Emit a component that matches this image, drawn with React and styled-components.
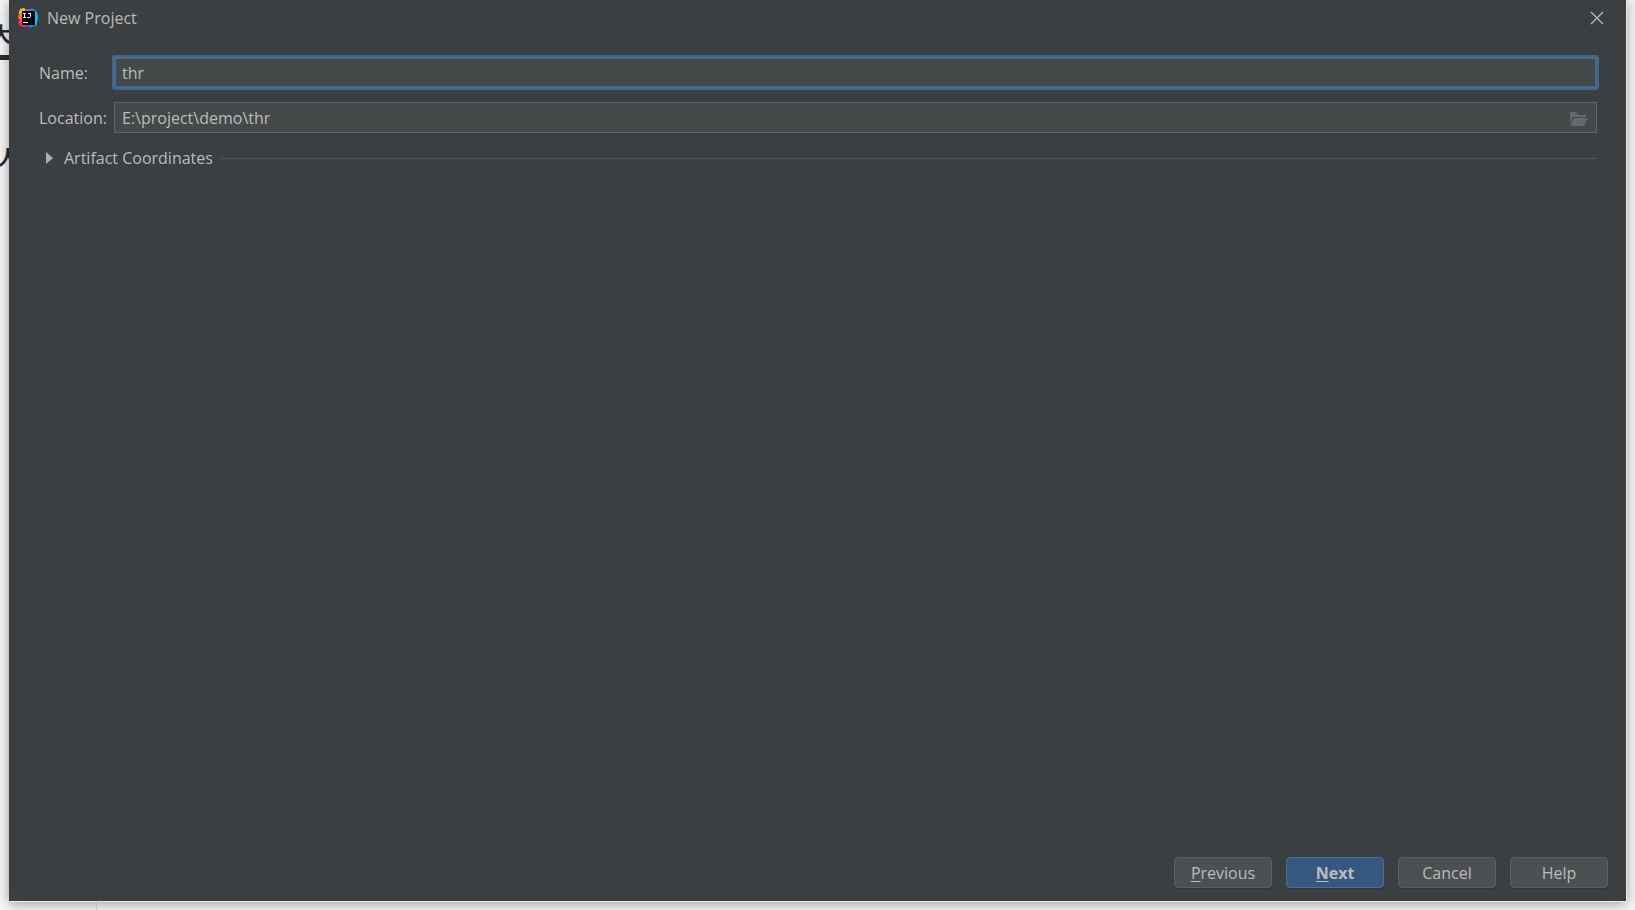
import React, { useState } from 'react';
import styled, { createGlobalStyle } from 'styled-components';

const GlobalStyle = createGlobalStyle`
  * {
    box-sizing: border-box;
  }

  body {
    margin: 0;
    background: #f4f4f4;
    font-family: 'Open Sans', 'Noto Sans CJK SC', sans-serif;
    font-size: 16px;
    color: #bbbbbb;
  }
`;

const Desktop = styled.div`
  display: flex;
  min-height: 100vh;
  overflow: hidden;
`;

const Gutter = styled.div`
  flex: 0 0 9px;
  overflow: hidden;
  background: #f7f7f7;
  color: #2b2b2b;
`;

const PageText = styled.div`
  height: 24px;
  line-height: 24px;
  font-size: 20px;
  font-weight: 700;
  white-space: nowrap;
  margin-top: ${props => props.$top}px;
  margin-left: ${props => props.$left}px;
`;

const PageRule = styled.div`
  height: 5px;
  margin-top: 8px;
  background: #2f2f2f;
`;

const Main = styled.div`
  flex: 1;
  display: flex;
  flex-direction: column;
  padding-right: 9px;
`;

const Dialog = styled.form`
  flex: 1;
  display: flex;
  flex-direction: column;
  background: #3c3f41;
  box-shadow: 1px 1px 0 #ececec, 0 2px 12px rgba(0, 0, 0, 0.4);
`;

const PageFoot = styled.div`
  width: 88px;
  height: 9px;
  border-right: 1px solid #c4c4c4;
`;

const TitleBar = styled.header`
  display: flex;
  align-items: center;
  height: 36px;
  padding: 0 22px 0 9px;
`;

const Title = styled.h1`
  flex: 1;
  margin: 0 0 0 9px;
  font-size: 16px;
  font-weight: 400;
`;

const CloseButton = styled.button`
  display: flex;
  padding: 0;
  border: none;
  background: none;
  color: #bbbbbb;
`;

const Fields = styled.div`
  flex: 1;
  padding: 21px 29px 0 30px;
`;

const Field = styled.div`
  display: flex;
  align-items: center;
  margin-bottom: 14px;
`;

const Label = styled.label`
  flex: 0 0 75px;
`;

const InputBox = styled.div`
  flex: 1;
  display: flex;
  align-items: center;
  height: 31px;
  padding-right: 7px;
  background: #45494a;
  border: 1px solid #646464;

  &:has(input[data-active='true']) {
    border: 1px solid #466d94;
    box-shadow: 0 0 0 2px #40668c, inset 0 0 0 1px #43698f;
    border-radius: 1px;
  }
`;

const Input = styled.input`
  flex: 1;
  min-width: 0;
  height: 27px;
  padding: 0 7px;
  border: none;
  outline: none;
  background: none;
  color: #bbbbbb;
  font: inherit;
`;

const IconButton = styled.button`
  display: flex;
  padding: 0;
  border: none;
  background: none;
`;

const Section = styled.div`
  display: flex;
  align-items: center;
  gap: 8px;
`;

const SectionToggle = styled.button`
  display: flex;
  align-items: center;
  gap: 11px;
  padding: 0 0 0 7px;
  border: none;
  background: none;
  color: #bbbbbb;
  font: inherit;
`;

const Line = styled.hr`
  flex: 1;
  height: 1px;
  margin: 0;
  border: none;
  background: #515658;
`;

const Footer = styled.footer`
  display: flex;
  justify-content: flex-end;
  gap: 14px;
  padding: 0 18px 13px;
`;

const Button = styled.button`
  width: 98px;
  height: 31px;
  padding: 0;
  border: 1px solid ${props => (props.$primary ? '#4c708c' : '#5e6060')};
  border-radius: 4px;
  background: ${props => (props.$primary ? '#365880' : '#4c5052')};
  color: #bbbbbb;
  font-family: inherit;
  font-size: 16px;
  font-weight: ${props => (props.$primary ? 700 : 400)};
  box-shadow: 0 1px 1px rgba(0, 0, 0, 0.15);
`;

const Mnemonic = styled.span`
  text-decoration: underline;
  text-underline-offset: 2px;
`;

function IdeaLogo() {
  return (
    <svg width="20" height="20" viewBox="0 0 20 20" aria-hidden="true">
      <path d="M1 4L2 1L6 0L10 3V17L7 19L2 18L0 14L2 10Z" fill="#fe315d" />
      <path d="M1 4L2 1L6 0L9 3L4 7L3 10L1 8Z" fill="#fdb60d" />
      <path d="M1 6L4 5V11L2 12L0 10Z" fill="#f97a12" />
      <path d="M9 3L14 0L19 4L20 10L18 18L12 20L8 17Z" fill="#087cfa" />
      <path d="M15 1L19 4L20 10L18 18L16 17V3Z" fill="#07c3f2" />
      <path d="M7 2L12 1L14 4H6Z" fill="#c757bc" />
      <rect x="4" y="3" width="13" height="14" fill="#000000" />
      <path d="M5 5.500h3M6.500 5v5M5 9.500h3" stroke="#ffffff" fill="none" />
      <path d="M10 5.500h3M12.500 5v3.500q0 1-1 1H9" stroke="#ffffff" fill="none" />
      <rect x="5" y="14" width="5" height="1" fill="#ffffff" />
    </svg>
  );
}

function CloseIcon() {
  return (
    <svg width="14" height="14" viewBox="0 0 14 14" aria-hidden="true">
      <path d="M1 1l12 12M13 1L1 13" stroke="currentColor" strokeWidth="1.2" fill="none" />
    </svg>
  );
}

function FolderIcon() {
  return (
    <svg width="20" height="16" viewBox="0 0 20 16" aria-hidden="true">
      <path d="M1 2h6l2 3h8v2H4L1 13z" fill="#63696d" />
      <path d="M5 8h14l-4 8H1z" fill="#63696d" />
    </svg>
  );
}

function ArrowIcon() {
  return (
    <svg width="7" height="12" viewBox="0 0 7 12" aria-hidden="true">
      <path d="M0 0l7 6-7 6z" fill="#adadad" />
    </svg>
  );
}

function App() {
  const [name, setName] = useState('thr');
  const [location, setLocation] = useState('E:\\project\\demo\\thr');

  return (
    <>
      <GlobalStyle />
      <Desktop>
        <Gutter aria-hidden="true">
          <PageText $top={23} $left={-9}>大</PageText>
          <PageRule />
          <PageText $top={86} $left={-2}>人</PageText>
        </Gutter>
        <Main>
          <Dialog onSubmit={e => e.preventDefault()}>
            <TitleBar>
              <IdeaLogo />
              <Title>New Project</Title>
              <CloseButton type="button" aria-label="Close">
                <CloseIcon />
              </CloseButton>
            </TitleBar>
            <Fields>
              <Field>
                <Label htmlFor="name">Name:</Label>
                <InputBox>
                  <Input
                    id="name"
                    data-active="true"
                    value={name}
                    onChange={e => setName(e.target.value)}
                  />
                </InputBox>
              </Field>
              <Field>
                <Label htmlFor="location">Location:</Label>
                <InputBox>
                  <Input
                    id="location"
                    value={location}
                    onChange={e => setLocation(e.target.value)}
                  />
                  <IconButton type="button" aria-label="Browse">
                    <FolderIcon />
                  </IconButton>
                </InputBox>
              </Field>
              <Section>
                <SectionToggle type="button" aria-expanded="false">
                  <ArrowIcon />
                  Artifact Coordinates
                </SectionToggle>
                <Line />
              </Section>
            </Fields>
            <Footer>
              <Button type="button"><Mnemonic>P</Mnemonic>revious</Button>
              <Button type="submit" $primary><Mnemonic>N</Mnemonic>ext</Button>
              <Button type="button">Cancel</Button>
              <Button type="button">Help</Button>
            </Footer>
          </Dialog>
          <PageFoot />
        </Main>
      </Desktop>
    </>
  );
}

export default App;
